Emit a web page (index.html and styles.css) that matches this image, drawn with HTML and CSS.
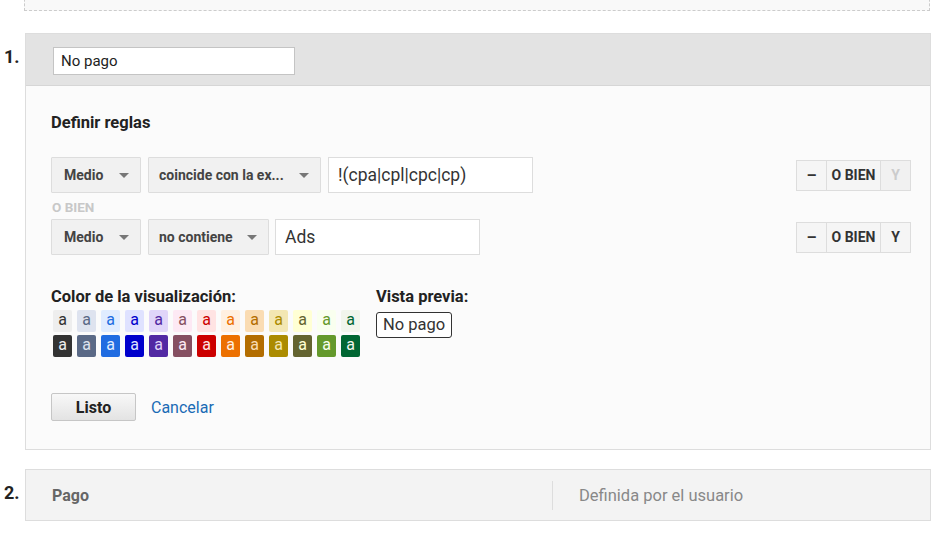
FILE: index.html
```html
<!DOCTYPE html>
<html lang="es">
<head>
  <meta charset="UTF-8" />
  <meta name="viewport" content="width=device-width, initial-scale=1.0"/>
  <title>Agrupación de canales</title>
  <link rel="stylesheet" href="styles.css">
</head>
<body>
  <div class="dropzone"></div>

  <div class="channel">
    <div class="channel-num">1.</div>
    <div class="channel-box">
      <div class="channel-head">
        <input type="text" class="name-input" value="No pago" />
      </div>

      <div class="channel-body">
        <h2>Definir reglas</h2>

        <div class="rule">
          <div class="rule-fields">
            <button class="select sel-dim">Medio <span class="caret"></span></button>
            <button class="select sel-op">coincide con la ex... <span class="caret"></span></button>
            <input type="text" class="value-input" value="!(cpa|cpl|cpc|cp)" />
          </div>
          <div class="rule-actions">
            <button class="act act-minus">&ndash;</button>
            <button class="act act-or">O BIEN</button>
            <button class="act act-and" disabled>Y</button>
          </div>
        </div>

        <div class="or-label">O BIEN</div>

        <div class="rule">
          <div class="rule-fields">
            <button class="select sel-dim">Medio <span class="caret"></span></button>
            <button class="select sel-op2">no contiene <span class="caret"></span></button>
            <input type="text" class="value-input" value="Ads" />
          </div>
          <div class="rule-actions">
            <button class="act act-minus">&ndash;</button>
            <button class="act act-or">O BIEN</button>
            <button class="act act-and">Y</button>
          </div>
        </div>

        <div class="display">
          <div class="colors">
            <h3>Color de la visualización:</h3>
            <div class="swatches" id="swatches"></div>
          </div>
          <div class="preview">
            <h3>Vista previa:</h3>
            <span class="preview-tag">No pago</span>
          </div>
        </div>

        <div class="form-actions">
          <button class="btn-done">Listo</button>
          <a href="#" class="link-cancel">Cancelar</a>
        </div>
      </div>
    </div>
  </div>

  <div class="channel">
    <div class="channel-num">2.</div>
    <div class="channel-box channel-closed">
      <div class="closed-name">Pago</div>
      <div class="closed-type">Definida por el usuario</div>
    </div>
  </div>

  <script>
    const light = [
      ['#eeeeee', '#333333'], ['#dee3ef', '#5a6986'], ['#e0ecff', '#206ce1'],
      ['#dfe2ff', '#0000cc'], ['#e0d5f9', '#5229a3'], ['#fde9f4', '#854f61'],
      ['#ffe3e3', '#cc0000'], ['#fff0e1', '#ec7000'], ['#fadcb3', '#b36d00'],
      ['#f3e7b3', '#ab8b00'], ['#ffffd4', '#636330'], ['#f9ffef', '#64992c'],
      ['#f1f5ec', '#006633']
    ];
    const dark = [
      ['#333333', '#eeeeee'], ['#5a6986', '#dee3ef'], ['#206ce1', '#e0ecff'],
      ['#0000cc', '#dfe2ff'], ['#5229a3', '#e0d5f9'], ['#854f61', '#fde9f4'],
      ['#cc0000', '#ffe3e3'], ['#ec7000', '#fff0e1'], ['#b36d00', '#fadcb3'],
      ['#ab8b00', '#f3e7b3'], ['#636330', '#ffffd4'], ['#64992c', '#f9ffef'],
      ['#006633', '#f1f5ec']
    ];
    const swatches = document.getElementById('swatches');
    [light, dark].forEach(function(set) {
      set.forEach(function(pair) {
        const s = document.createElement('span');
        s.className = 'swatch';
        s.textContent = 'a';
        s.style.backgroundColor = pair[0];
        s.style.color = pair[1];
        swatches.appendChild(s);
      });
    });
  </script>
</body>
</html>
```

FILE: styles.css
```css
* {
  box-sizing: border-box;
  margin: 0;
  padding: 0;
}

body {
  font-family: Roboto, 'Liberation Sans', Arial, sans-serif;
  background: #fff;
  color: #333;
  overflow: hidden;
}

.dropzone {
  margin: -20px 0 0 24px;
  width: 906px;
  height: 31px;
  border: 1px dashed #ccc;
  background: #f9f9f9;
}

.channel {
  display: flex;
  margin-top: 22px;
}

.channel + .channel {
  margin-top: 19px;
}

.channel-num {
  width: 25px;
  padding: 13px 0 0 4px;
  font-size: 18px;
  font-weight: 700;
  color: #222;
}

.channel-box {
  width: 906px;
  border: 1px solid #ddd;
  background: #fbfbfb;
}

.channel-head {
  height: 52px;
  padding: 13px 0 0 27px;
  background: #e3e3e3;
  border-bottom: 1px solid #d6d6d6;
}

.name-input {
  width: 242px;
  height: 28px;
  padding: 0 7px;
  border: 1px solid #c4c4c4;
  font-family: inherit;
  font-size: 15px;
  color: #222;
  background: #fff;
}

.channel-body {
  padding: 27px 19px 28px 25px;
}

h2 {
  font-size: 16.5px;
  font-weight: 700;
  color: #222;
  margin-bottom: 25px;
}

.rule {
  display: flex;
  justify-content: space-between;
  align-items: center;
}

.rule-fields {
  display: flex;
  gap: 7px;
}

.select {
  display: flex;
  align-items: center;
  justify-content: space-between;
  height: 36px;
  padding: 0 11px 0 12px;
  border: 1px solid #ddd;
  border-radius: 1px;
  background: #f1f1f1;
  font-family: inherit;
  font-size: 14px;
  font-weight: 700;
  color: #444;
  text-align: left;
}

.sel-dim { width: 90px; }
.sel-op { width: 173px; padding-left: 10px; }
.sel-op2 { width: 121px; padding-left: 10px; margin-right: -1px; }

.caret {
  width: 0;
  height: 0;
  border-left: 5px solid transparent;
  border-right: 5px solid transparent;
  border-top: 5px solid #777;
}

.value-input {
  width: 205px;
  height: 36px;
  padding: 0 9px;
  border: 1px solid #ddd;
  background: #fff;
  font-family: inherit;
  font-size: 17.5px;
  color: #333;
}

.rule-actions {
  display: flex;
}

.act {
  height: 31px;
  border: 1px solid #ddd;
  background: #f5f5f5;
  font-family: inherit;
  font-size: 14px;
  font-weight: 700;
  color: #333;
}

.act + .act {
  border-left: none;
}

.act-minus { width: 31px; font-size: 16px; }
.act-or { width: 54px; }
.act-and { width: 30px; }

.act:disabled {
  color: #ccc;
  background: #f1f1f1;
}

.or-label {
  font-size: 13.5px;
  font-weight: 700;
  color: #c8c8c8;
  padding: 5px 0 3px 1px;
  line-height: 18px;
}

.display {
  display: flex;
  gap: 16px;
  margin-top: 32px;
}

h3 {
  font-size: 16.5px;
  font-weight: 700;
  color: #222;
  margin-bottom: 4px;
}

.swatches {
  display: grid;
  grid-template-columns: repeat(13, 19px);
  grid-auto-rows: 22px;
  column-gap: 5px;
  row-gap: 3px;
  padding-left: 2px;
}

.swatch {
  display: flex;
  align-items: center;
  justify-content: center;
  border-radius: 2px;
  font-size: 16px;
  line-height: 1;
  padding-bottom: 2px;
}

.preview-tag {
  display: inline-block;
  margin-top: 2px;
  padding: 2px 6px 3px;
  border: 1px solid #333;
  border-radius: 3px;
  background: #fff;
  font-size: 16.5px;
  color: #333;
}

.form-actions {
  display: flex;
  align-items: center;
  gap: 15px;
  margin-top: 36px;
}

.btn-done {
  width: 85px;
  height: 28px;
  border: 1px solid #c6c6c6;
  border-radius: 2px;
  background: linear-gradient(#f8f8f8, #e3e3e3);
  font-family: inherit;
  font-size: 16px;
  font-weight: 700;
  color: #222;
}

.link-cancel {
  font-size: 16px;
  color: #1a6bb5;
  text-decoration: none;
}

.channel-closed {
  display: flex;
  align-items: center;
  height: 52px;
  background: #f3f3f3;
}

.closed-name {
  width: 526px;
  padding-left: 26px;
  font-size: 16px;
  font-weight: 700;
  color: #666;
}

.closed-type {
  height: 29px;
  line-height: 29px;
  padding-left: 26px;
  border-left: 1px solid #ddd;
  font-size: 16.5px;
  color: #888;
}
```
